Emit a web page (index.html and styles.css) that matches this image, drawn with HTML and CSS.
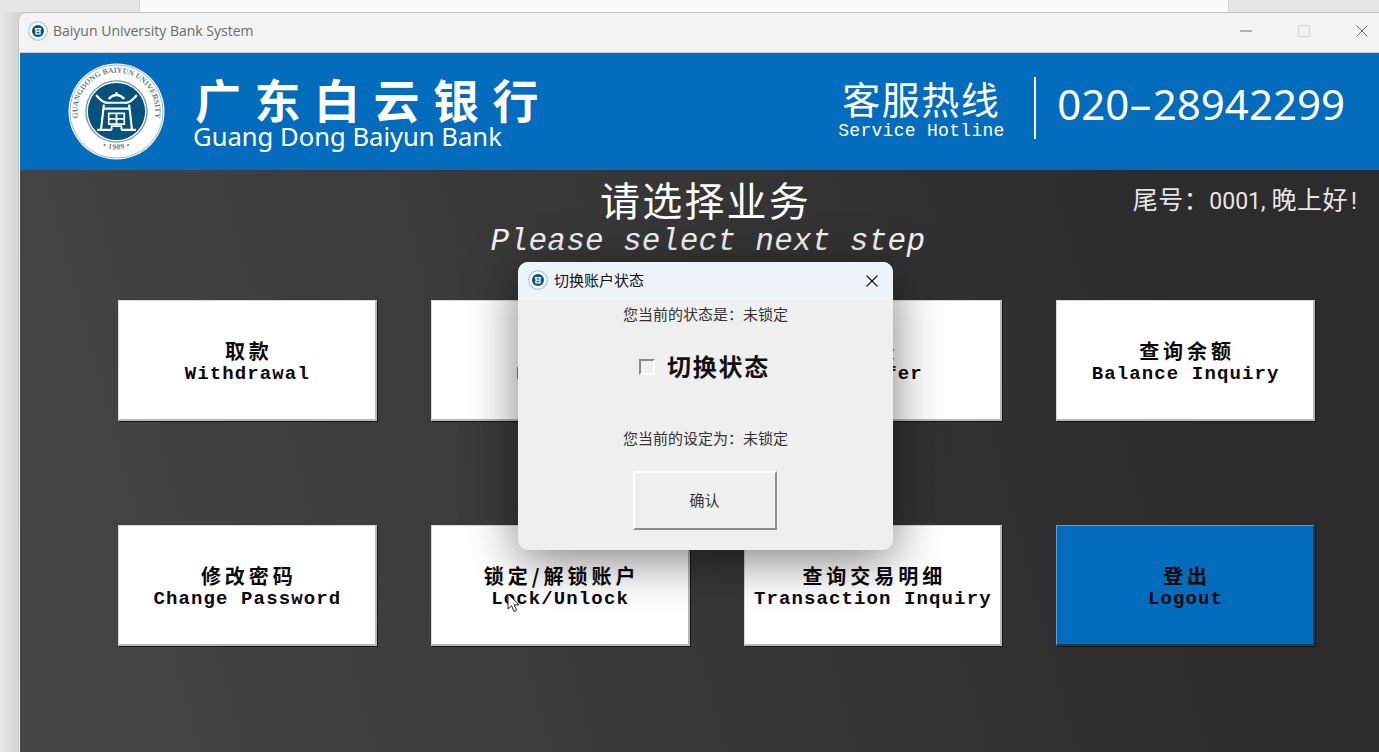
FILE: index.html
```html
<!DOCTYPE html>
<html lang="zh-CN">
<head>
    <meta charset="UTF-8">
    <meta name="viewport" content="width=device-width, initial-scale=1.0">
    <title>Baiyun University Bank System</title>

    <link rel="stylesheet" href="styles.css">
</head>
<body>

    <svg class="defs" width="0" height="0">
        <symbol id="mark" viewBox="-50 -50 100 100">
            <circle r="29.5" fill="#06527c"/>
            <g fill="none" stroke="#fff" stroke-width="2.2">
                <path d="M-21 -17 Q-14 -8 -8 -9 L8 -9 Q14 -8 21 -17"/>
                <path d="M-8 -13 Q0 -21 8 -13" stroke-width="2.6"/>
                <path d="M0 -20 V-16"/>
                <path d="M-13 -7 L-16 19 M13 -7 L16 19"/>
                <path d="M-13 -3 H13"/>
                <path d="M-8 2 H8 V13 H-8 Z M-8 7.5 H8 M0 2 V13" stroke-width="1.8"/>
                <path d="M-20 19 H-5 M5 19 H20"/>
                <path d="M-5 19 V15 H5 V19" stroke-width="1.8"/>
            </g>
        </symbol>
        <symbol id="seal" viewBox="-50 -50 100 100">
            <circle r="49.5" fill="#fff"/>
            <circle r="48" fill="none" stroke="#7f9db1" stroke-width="0.8"/>
            <circle r="31.5" fill="none" stroke="#6f97ae" stroke-width="1.4"/>
            <use href="#mark" x="-50" y="-50" width="100" height="100"/>
        </symbol>
        <symbol id="icon" viewBox="-50 -50 100 100">
            <circle r="46" fill="#f4f8fa" stroke="#7fa3b8" stroke-width="6" stroke-dasharray="5 4"/>
            <circle r="30" fill="#06527c"/>
            <path d="M-16 -12 H16 M-10 -12 V14 M10 -12 V14 M-14 14 H14 M-10 1 H10" stroke="#fff" stroke-width="6" fill="none"/>
        </symbol>
    </svg>

    <div class="backdrop">
        <div class="backdrop-side"></div>
        <div class="backdrop-page"></div>
        <div class="backdrop-side"></div>
    </div>

    <div class="window">
        <div class="titlebar">
            <div class="titlebar-name">
                <svg class="app-icon"><use href="#icon"/></svg>
                <span>Baiyun University Bank System</span>
            </div>
            <div class="controls">
                <span class="control">
                    <svg width="12" height="12" viewBox="0 0 12 12"><path d="M0 6H12" stroke="#777" fill="none"/></svg>
                </span>
                <span class="control">
                    <svg width="12" height="12" viewBox="0 0 12 12"><rect x="0.5" y="0.5" width="11" height="11" rx="1.5" stroke="#d4d4d4" fill="none"/></svg>
                </span>
                <span class="control">
                    <svg width="12" height="12" viewBox="0 0 12 12"><path d="M0.5 0.5L11.5 11.5M11.5 0.5L0.5 11.5" stroke="#666" fill="none"/></svg>
                </span>
            </div>
        </div>

        <header class="banner">
            <div class="brand">
                <svg class="seal" viewBox="-50 -50 100 100">
                    <use href="#seal" x="-50" y="-50" width="100" height="100"/>
                    <defs>
                        <path id="arc-top" d="M-36 18 A40.2 40.2 0 1 1 36 18"/>
                        <path id="arc-bottom" d="M-39 6 A39.5 39.5 0 0 0 39 6"/>
                    </defs>
                    <text class="seal-text"><textPath href="#arc-top" startOffset="50%" text-anchor="middle">GUANGDONG BAIYUN UNIVERSITY</textPath></text>
                    <text class="seal-year"><textPath href="#arc-bottom" startOffset="50%" text-anchor="middle">• 1989 •</textPath></text>
                </svg>
                <div class="brand-name">
                    <div class="brand-cn">广东白云银行</div>
                    <div class="brand-en">Guang Dong Baiyun Bank</div>
                </div>
            </div>
            <div class="hotline">
                <div class="hotline-label">
                    <div class="hotline-cn">客服热线</div>
                    <div class="hotline-en">Service Hotline</div>
                </div>
                <div class="hotline-rule"></div>
                <div class="hotline-number">020<span class="dash">-</span>28942299</div>
            </div>
        </header>

        <main class="panel">
            <div class="heading">
                <div></div>
                <div class="heading-text">
                    <h1>请选择业务</h1>
                    <p>Please select next step</p>
                </div>
                <div class="greeting">尾号：<span class="num">0001,</span>晚上好<span class="num bang">!</span></div>
            </div>

            <div class="actions">
                <div class="action"><b>取款</b><span>Withdrawal</span></div>
                <div class="action"><b>存款</b><span>Deposit</span></div>
                <div class="action"><b>转账</b><span>Transfer</span></div>
                <div class="action"><b>查询余额</b><span>Balance Inquiry</span></div>
                <div class="action"><b>修改密码</b><span>Change Password</span></div>
                <div class="action"><b>锁定/解锁账户</b><span>Lock/Unlock</span></div>
                <div class="action"><b>查询交易明细</b><span>Transaction Inquiry</span></div>
                <div class="action action-logout"><b>登出</b><span>Logout</span></div>
            </div>
        </main>
    </div>

    <div class="dialog">
        <div class="dialog-title">
            <div class="dialog-name">
                <svg class="app-icon"><use href="#icon"/></svg>
                <span>切换账户状态</span>
            </div>
            <svg class="dialog-close" width="12" height="12" viewBox="0 0 12 12"><path d="M0.5 0.5L11.5 11.5M11.5 0.5L0.5 11.5" stroke="#111" stroke-width="1.1" fill="none"/></svg>
        </div>
        <div class="dialog-body">
            <p class="dialog-line">您当前的状态是：未锁定</p>
            <label class="toggle">
                <span class="toggle-box"></span>
                <span>切换状态</span>
            </label>
            <p class="dialog-line">您当前的设定为：未锁定</p>
            <div class="confirm">确认</div>
        </div>
    </div>

    <svg class="cursor" width="14" height="20" viewBox="0 0 14 20">
        <path d="M1 1V16L4.6 12.8L7 18.5L9.6 17.4L7.2 11.8H12Z" fill="#fff" stroke="#222" stroke-width="1"/>
    </svg>

</body>
</html>
```

FILE: styles.css
```css
html, body {
    height: 100%;
}

body {
    margin: 0;
    overflow: hidden;
    background: linear-gradient(90deg, #e6e6e6, #d6d6d6 18px);
    font-family: "Noto Sans CJK SC", "Noto Sans", sans-serif;
}

.defs {
    position: absolute;
}

.backdrop {
    display: flex;
    height: 12px;
}

.backdrop-side {
    flex: 0 0 150px;
    background: #e6e6e6;
    border: 1px solid #cfcfcf;
    border-width: 0 1px 0 0;
}

.backdrop-side:first-child {
    flex-basis: 139px;
}

.backdrop-side:last-child {
    border-width: 0 0 0 1px;
}

.backdrop-page {
    flex: 1;
    background: #fbfbfb;
}

/* main window */
.window {
    position: absolute;
    left: 18px;
    top: 12px;
    width: 1374px;
    height: 760px;
    box-sizing: border-box;
    display: flex;
    flex-direction: column;
    background: #f3f3f3;
    border: 1px solid #c4c4c4;
    border-radius: 8px 8px 0 0;
    overflow: hidden;
}

.titlebar {
    flex: 0 0 40px;
    display: flex;
    align-items: center;
    justify-content: space-between;
    padding-bottom: 4px;
    border-bottom: 1px solid #d2d2d2;
    box-sizing: border-box;
}

.titlebar-name {
    display: flex;
    align-items: center;
    gap: 5px;
    padding-left: 9px;
    font-size: 14px;
    color: #6b6b6b;
    font-family: "Open Sans", sans-serif;
}

.app-icon {
    width: 20px;
    height: 20px;
}

.controls {
    display: flex;
}

.control {
    width: 58px;
    display: flex;
    justify-content: center;
}

.banner {
    flex: 0 0 117px;
    margin-left: 1px;
    display: flex;
    align-items: center;
    justify-content: space-between;
    background: #036cbd;
    color: #fff;
    padding: 0 46px 0 48px;
}

.brand {
    display: flex;
    align-items: center;
    gap: 30px;
}

.seal {
    width: 97px;
    height: 97px;
}

.seal-text {
    font: bold 8px "Liberation Serif", serif;
    fill: #5d8197;
}

.seal-year {
    font: bold 8px "Liberation Serif", serif;
    fill: #5d8197;
    letter-spacing: 0.5px;
}

.brand-cn {
    font-size: 46px;
    font-weight: 700;
    line-height: 50px;
    letter-spacing: 13.5px;
    white-space: nowrap;
}

.brand-en {
    font-family: "Noto Sans", sans-serif;
    font-size: 25.6px;
    line-height: 27px;
    margin-left: -2px;
    white-space: nowrap;
}

.hotline {
    display: flex;
    align-items: center;
    padding-bottom: 8px;
}

.hotline-label {
    width: 166px;
    text-align: center;
}

.hotline-cn {
    font-size: 38px;
    line-height: 46px;
    letter-spacing: 1.5px;
}

.hotline-en {
    font-family: "Liberation Mono", monospace;
    font-size: 18px;
    line-height: 20px;
    letter-spacing: 0.3px;
    white-space: nowrap;
}

.hotline-rule {
    width: 2px;
    height: 62px;
    margin: 0 21px 0 30px;
    background: #fff;
}

.hotline-number {
    font-family: "Noto Sans", sans-serif;
    font-size: 42px;
    margin-bottom: 8px;
    white-space: nowrap;
}

.dash {
    display: inline-block;
    transform: scaleX(1.8);
    margin: 0 5px;
}

/* dark panel */
.panel {
    flex: 1;
    margin-left: 1px;
    background: linear-gradient(75deg, #464646, #2c2c2c 85%);
    color: #fff;
}

.heading {
    display: grid;
    grid-template-columns: 1fr auto 1fr;
    padding-top: 4px;
}

.heading-text {
    text-align: center;
}

h1 {
    margin: 0;
    font-size: 40px;
    font-weight: 400;
    line-height: 50px;
    letter-spacing: 2.2px;
}

.heading-text p {
    margin: 1px 0 0;
    padding-left: 5px;
    font-family: "Liberation Mono", monospace;
    font-style: italic;
    font-size: 31px;
    line-height: 34px;
    letter-spacing: 0.3px;
    white-space: nowrap;
    color: #f2f2f2;
}

.greeting {
    justify-self: end;
    padding: 6px 34px 0 0;
    font-size: 25px;
    line-height: 36px;
    letter-spacing: 0.5px;
    color: #e6e6e6;
    white-space: nowrap;
}

.num {
    font-family: Roboto, sans-serif;
    font-size: 23px;
    letter-spacing: 0;
    margin-right: 6px;
}

.bang {
    margin: 0 0 0 3px;
}

.actions {
    display: grid;
    grid-template-columns: repeat(4, 1fr);
    grid-auto-rows: 121px;
    column-gap: 54px;
    row-gap: 104px;
    width: 1197px;
    margin: 41px 0 0 98px;
}

.action {
    box-sizing: border-box;
    display: flex;
    flex-direction: column;
    align-items: center;
    justify-content: center;
    padding-top: 3px;
    background: #fff;
    color: #0a0a0a;
    border: 1px solid #d8d8d8;
    border-right: 2px solid #b8b8b8;
    border-bottom: 2px solid #b8b8b8;
    box-shadow: 1px 1px 0 #161616;
}

.action b {
    font-size: 20px;
    line-height: 24px;
    letter-spacing: 4px;
    padding-left: 4px;
}

.action span {
    font-family: "Liberation Mono", monospace;
    font-weight: 700;
    font-size: 19px;
    line-height: 22px;
    letter-spacing: 1.1px;
    padding-left: 1px;
    white-space: nowrap;
}

.action-logout {
    background: #036cbd;
    border-color: #5c9ed2 #1a3a55 #1a3a55 #5c9ed2;
}

/* dialog over the window */
.dialog {
    position: absolute;
    left: 518px;
    top: 262px;
    width: 375px;
    height: 288px;
    display: flex;
    flex-direction: column;
    background: #efefef;
    border-radius: 10px;
    overflow: hidden;
    box-shadow: 0 10px 50px rgba(0, 0, 0, 0.5);
}

.dialog-title {
    flex: 0 0 38px;
    box-sizing: border-box;
    display: flex;
    align-items: center;
    justify-content: space-between;
    padding: 0 15px 3px 10px;
    background: #eef2f9;
}

.dialog-close {
    margin-top: 3px;
}

.dialog-name {
    display: flex;
    align-items: center;
    gap: 6px;
    font-size: 15px;
    color: #111;
}

.dialog-body {
    flex: 1;
    display: flex;
    flex-direction: column;
    align-items: center;
    color: #333;
}

.dialog-line {
    margin: 0;
    font-size: 15px;
    line-height: 28px;
    white-space: nowrap;
}

.toggle {
    display: flex;
    align-items: center;
    gap: 12px;
    height: 34px;
    margin: 20px 2px 42px 0;
    font-size: 24px;
    font-weight: 700;
    letter-spacing: 1.7px;
    color: #111;
}

.toggle-box {
    box-sizing: border-box;
    width: 16px;
    height: 16px;
    margin-top: 4px;
    background: #efefef;
    border: 2px solid;
    border-color: #8a8a8a #fff #fff #8a8a8a;
}

.confirm {
    box-sizing: border-box;
    width: 144px;
    height: 59px;
    margin: 19px 2px 0 0;
    padding-bottom: 2px;
    display: flex;
    align-items: center;
    justify-content: center;
    font-size: 15px;
    border: 2px solid;
    border-color: #fff #8e8e8e #8e8e8e #fff;
}

.cursor {
    position: absolute;
    left: 507px;
    top: 593px;
}
```
